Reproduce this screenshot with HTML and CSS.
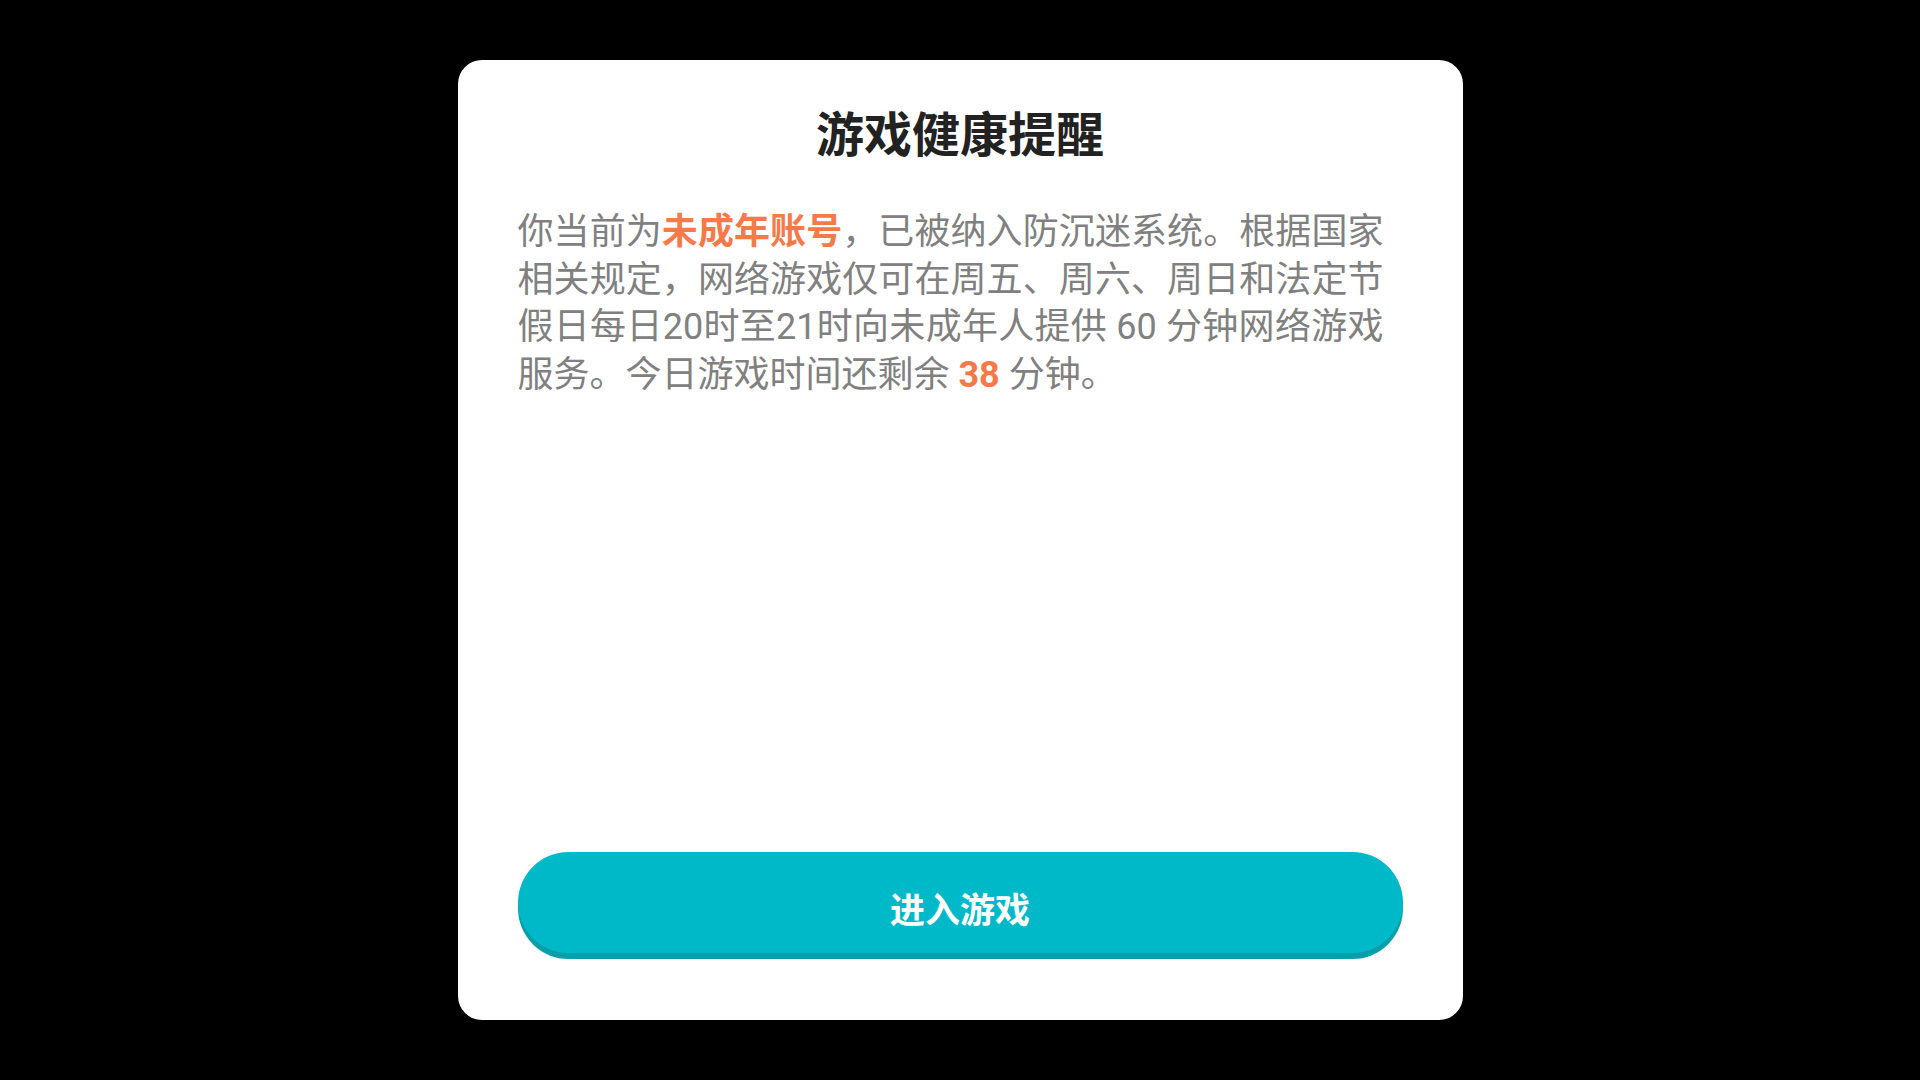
FILE: index.html
```html
<!DOCTYPE html>
<html lang="zh-CN">
<head>
  <meta charset="UTF-8" />
  <meta name="viewport" content="width=device-width, initial-scale=1.0"/>
  <title>游戏健康提醒</title>
  <link rel="stylesheet" href="styles.css">
</head>
<body>

  <!-- Anti-addiction dialog -->
  <div class="dialog">
    <h1 class="dialog-title">游戏健康提醒</h1>
    <div class="notice">
      <span class="line">你当前为<b class="hl">未成年账号</b>，已被纳入防沉迷系统。根据国家</span>
      <span class="line">相关规定，网络游戏仅可在周五、周六、周日和法定节</span>
      <span class="line">假日每日20时至21时向未成年人提供 60 分钟网络游戏</span>
      <span class="line last">服务。今日游戏时间还剩余 <b class="hl">38</b> 分钟。</span>
    </div>
    <div class="spacer"></div>
    <button class="enter-btn" type="button">进入游戏</button>
  </div>

</body>
</html>
```

FILE: styles.css
```css
body {
  margin: 0;
  padding: 0;
  background: #000;
  font-family: Roboto, "Noto Sans CJK SC", sans-serif;
}

.dialog {
  width: 1005px;
  height: 960px;
  margin: 60px auto 0;
  box-sizing: border-box;
  padding: 42px 60px 67px;
  background: #fff;
  border-radius: 24px;
  display: flex;
  flex-direction: column;
}

.dialog-title {
  margin: 0;
  font-size: 48px;
  line-height: 67px;
  font-weight: 700;
  color: #222;
  text-align: center;
}

.notice {
  width: 866px;
  margin-top: 40px;
  font-size: 36px;
  line-height: 47.5px;
  color: #808080;
}

.line {
  display: block;
  text-align: justify;
  text-align-last: justify;
}

.line.last {
  text-align-last: left;
}

.hl {
  color: #f47a4a;
  font-weight: 700;
}

.spacer {
  flex: 1;
}

.enter-btn {
  height: 101px;
  width: 100%;
  padding: 10px 0 0;
  border: none;
  border-radius: 51px;
  background: #00b9c8;
  box-shadow: 0 6px 0 #0a9daa;
  color: #fff;
  font-family: Roboto, "Noto Sans CJK SC", sans-serif;
  font-size: 35px;
  font-weight: 700;
  cursor: pointer;
}
```
